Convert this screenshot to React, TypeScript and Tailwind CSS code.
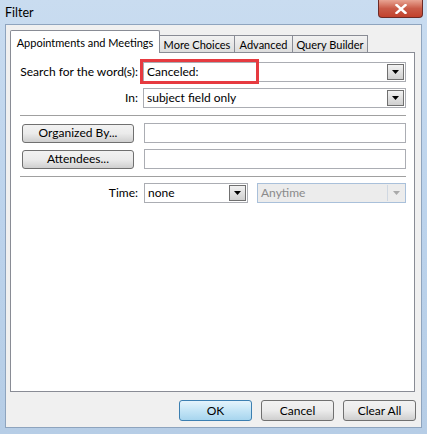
const font = { fontFamily: 'Lato, "Noto Sans", sans-serif' };

const Arrow = ({ disabled = false }: { disabled?: boolean }) => (
  <svg width="7" height="4" viewBox="0 0 7 4">
    <path d="M0 0h7L3.5 4z" fill={disabled ? '#a9a9a9' : '#000'} />
  </svg>
);

const Combo = ({ value, className = '' }: { value: string; className?: string }) => (
  <div className={`h-[20px] flex items-center border border-[#abadb3] bg-white pl-[3px] pr-[1px] ${className}`}>
    <span className="flex-1 text-[12px] leading-none text-black whitespace-nowrap">{value}</span>
    <div className="w-[17px] h-[16px] flex items-center justify-center border border-[#707070] bg-gradient-to-b from-[#f2f2f2] to-[#cfcfcf]">
      <Arrow />
    </div>
  </div>
);

const Btn = ({ label, className = '' }: { label: string; className?: string }) => (
  <button className={`h-[19px] rounded-[3px] border border-[#707070] bg-gradient-to-b from-[#f2f2f2] via-[#ebebeb] to-[#cfcfcf] text-[12px] leading-none text-black whitespace-nowrap ${className}`}>
    {label}
  </button>
);

export default function App() {
  return (
    <div style={font} className="w-[427px] h-[434px] flex flex-col bg-gradient-to-b from-[#c9dcf0] via-[#bcd3ec] to-[#b6cde6] overflow-hidden">
      {/* title bar */}
      <div className="h-[24px] flex items-start justify-between">
        <span className="pl-[5px] pt-[4px] text-[12.5px] text-black">Filter</span>
        <div className="mr-[4px] w-[45px] h-[18px] rounded-b-[4px] border border-[#6d2a26] border-t-0 bg-gradient-to-b from-[#e8a493] via-[#c95b48] to-[#c2412c] flex items-center justify-center">
          <svg width="12" height="10" viewBox="0 0 12 10">
            <path d="M1.5 1l9 8M10.5 1l-9 8" stroke="#fff" strokeWidth="2.4" strokeLinecap="square" />
          </svg>
        </div>
      </div>

      {/* client area */}
      <div className="flex-1 mx-[5px] mb-[6px] border border-[#8ea4be] bg-[#f0f0f0] flex flex-col px-[4px] pt-[5px]">
        {/* tabs */}
        <div className="flex items-end h-[23px] text-[11px] leading-none text-black whitespace-nowrap">
          <div className="relative z-10 h-[23px] w-[150px] border border-[#898c95] border-b-0 bg-white flex items-center justify-center rounded-t-[2px]">
            Appointments and Meetings
          </div>
          <div className="h-[18px] w-[75px] border border-[#898c95] border-b-0 border-l-0 bg-gradient-to-b from-[#f2f2f2] to-[#dcdcdc] flex items-center justify-center">More Choices</div>
          <div className="h-[18px] w-[58px] border border-[#898c95] border-b-0 border-l-0 bg-gradient-to-b from-[#f2f2f2] to-[#dcdcdc] flex items-center justify-center">Advanced</div>
          <div className="h-[18px] w-[75px] border border-[#898c95] border-b-0 border-l-0 bg-gradient-to-b from-[#f2f2f2] to-[#dcdcdc] flex items-center justify-center">Query Builder</div>
        </div>

        {/* panel */}
        <div className="-mt-px w-[405px] h-[340px] border border-[#898c95] bg-white pl-[9px] pr-[8px] pt-[9px] flex flex-col text-[12px] leading-none text-black">
          <div className="flex items-center gap-[5px]">
            <span className="w-[118px] text-right whitespace-nowrap">Search for the word(s):</span>
            <div className="relative flex-1">
              <Combo value="Canceled:" />
              <div className="absolute -left-[3px] -top-[3px] w-[119px] h-[25px] border-[3px] border-[#e63a40]" />
            </div>
          </div>
          <div className="mt-[6px] flex items-center gap-[5px]">
            <span className="w-[118px] text-right">In:</span>
            <Combo value="subject field only" className="flex-1" />
          </div>
          <div className="mt-[7px] h-px bg-[#a0a0a0]" />
          <div className="mt-[7px] flex items-center">
            <Btn label="Organized By..." className="ml-[2px] w-[112px]" />
            <div className="ml-[10px] flex-1 h-[20px] border border-[#abadb3]" />
          </div>
          <div className="mt-[6px] flex items-center">
            <Btn label="Attendees..." className="ml-[2px] w-[112px]" />
            <div className="ml-[10px] flex-1 h-[20px] border border-[#abadb3]" />
          </div>
          <div className="mt-[7px] h-px bg-[#a0a0a0]" />
          <div className="mt-[6px] flex items-center">
            <span className="w-[118px] text-right">Time:</span>
            <Combo value="none" className="ml-[6px] w-[104px]" />
            <div className="ml-[9px] flex-1 h-[20px] flex items-center border border-[#a9c0da] bg-[#ececec] pl-[3px] pr-[1px]">
              <span className="flex-1 text-[#8a8a8a]">Anytime</span>
              <div className="w-[17px] h-[16px] flex items-center justify-center border-l border-[#d0d8e2]">
                <Arrow disabled />
              </div>
            </div>
          </div>
        </div>

        {/* buttons */}
        <div className="mt-[8px] flex justify-end gap-[9px] pr-[1px]">
          <button className="w-[73px] h-[21px] rounded-[3px] border border-[#3c7fb1] bg-gradient-to-b from-[#e5f4fc] via-[#c4e5f6] to-[#a7d5ee] text-[12px] leading-none text-black">OK</button>
          <Btn label="Cancel" className="w-[73px] !h-[21px]" />
          <Btn label="Clear All" className="w-[73px] !h-[21px]" />
        </div>
      </div>
    </div>
  );
}
